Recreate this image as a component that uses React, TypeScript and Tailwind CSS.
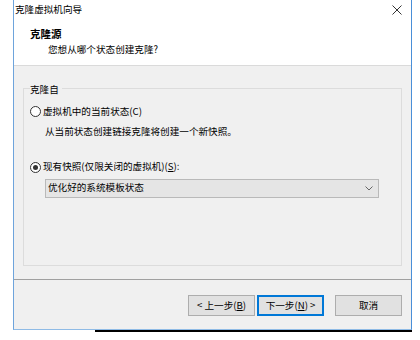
import React from "react";

const F = { fontFamily: '"Noto Sans CJK SC", "Noto Sans", sans-serif' };

function Radio({ checked }: { checked?: boolean }) {
  return (
    <span className="flex h-[11px] w-[11px] shrink-0 items-center justify-center rounded-full border border-[#333333] bg-white">
      {checked && <span className="h-[5px] w-[5px] rounded-full bg-[#333333]" />}
    </span>
  );
}

export default function App() {
  return (
    <div className="h-[340px] w-[420px] bg-white text-[9.6px] leading-none text-black" style={F}>
      <div className="ml-[13px] flex h-[330px] w-[399px] flex-col border-x border-b border-x-[#6ea4dc] border-b-[#8fbbe6] border-r-[#4a8fd8]">
        {/* title bar */}
        <div className="flex h-[20px] items-center justify-between bg-white pl-[1px] pr-[9px]">
          <span>克隆虚拟机向导</span>
          <svg width="10" height="10" viewBox="0 0 10 10">
            <path d="M0.5 0.5 L9.5 9.5 M9.5 0.5 L0.5 9.5" stroke="#333" strokeWidth="1" />
          </svg>
        </div>
        {/* header */}
        <div className="flex h-[46px] flex-col border-b border-[#dadada] bg-white pl-[16px] pt-[9px]">
          <span className="text-[10.5px] font-bold">克隆源</span>
          <span className="ml-[18px] mt-[5px]">您想从哪个状态创建克隆?</span>
        </div>
        {/* body */}
        <div className="flex flex-1 flex-col bg-[#f0f0f0]">
          <div className="relative mx-[9px] mt-[22px] h-[178px] border border-[#dcdcdc]">
            <span className="absolute left-[6px] top-[-4px] bg-[#f0f0f0] pr-[3px]">克隆自</span>
            <div className="flex flex-col pl-[6px] pt-[17px]">
              <div className="flex items-center gap-[2px]">
                <Radio />
                <span>虚拟机中的当前状态(C)</span>
              </div>
              <span className="ml-[15px] mt-[10px]">从当前状态创建链接克隆将创建一个新快照。</span>
              <div className="mt-[25px] flex items-center gap-[2px]">
                <Radio checked />
                <span>
                  现有快照(仅限关闭的虚拟机)(<span className="underline">S</span>):
                </span>
              </div>
              <div className="ml-[15px] mt-[6px] flex h-[19px] w-[334px] items-center justify-between border border-[#b9b9b9] bg-[#e5e5e5] pl-[2px] pr-[5px]">
                <span>优化好的系统模板状态</span>
                <svg width="8" height="5" viewBox="0 0 8 5">
                  <path d="M0.5 0.5 L4 4 L7.5 0.5" stroke="#666" strokeWidth="1" fill="none" />
                </svg>
              </div>
            </div>
          </div>
          <div className="mt-[13px] h-px bg-[#a0a0a0]" />
          <div className="mt-[15px] flex justify-end pr-[9px]">
            <div className="flex h-[21px] w-[67px] items-center justify-center border border-[#adadad] bg-[#e1e1e1]">
              &lt; 上一步(<span className="underline">B</span>)
            </div>
            <div className="ml-[2px] flex h-[21px] w-[67px] items-center justify-center border-2 border-[#0078d7] bg-[#e1e1e1]">
              下一步(<span className="underline">N</span>) &gt;
            </div>
            <div className="ml-[11px] flex h-[21px] w-[67px] items-center justify-center border border-[#adadad] bg-[#e1e1e1]">
              取消
            </div>
          </div>
        </div>
      </div>
      <div className="ml-[95px] h-[2px] w-[317px] bg-black" />
    </div>
  );
}
